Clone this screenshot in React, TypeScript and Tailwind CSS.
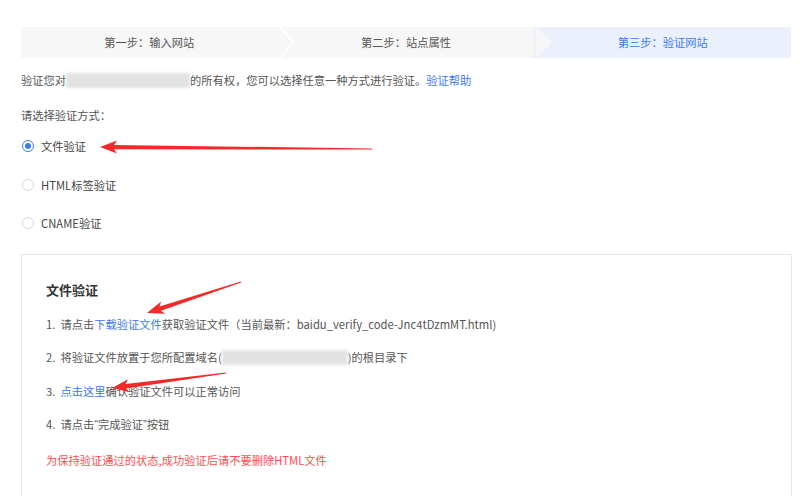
import type { ReactNode } from "react";

const FONT = { fontFamily: '"Noto Sans CJK SC", "Noto Sans", sans-serif' };

const STEPS = ["第一步：输入网站", "第二步：站点属性", "第三步：验证网站"];

function Blur({ w }: { w: number }) {
  return (
    <span className="inline-block align-middle h-[15px] bg-[#dcdcdc] blur-[1.5px] opacity-80" style={{ width: w }} />
  );
}

function Radio({ checked, children }: { checked?: boolean; children: ReactNode }) {
  return (
    <label className="flex items-center gap-[7px] h-4 ml-[1px]">
      <span className={`w-[12px] h-[12px] rounded-full border flex items-center justify-center ${checked ? "border-[#3c7cf0]" : "border-[#d9d9d9]"}`}>
        {checked && <span className="w-[6px] h-[6px] rounded-full bg-[#3c7cf0]" />}
      </span>
      <span className="text-[#444]">{children}</span>
    </label>
  );
}

// arrow polygon from tip to tail, tapered shaft
function arrowPts(tx: number, ty: number, ex: number, ey: number) {
  const dx = ex - tx, dy = ey - ty;
  const len = Math.hypot(dx, dy);
  const ux = dx / len, uy = dy / len;
  const nx = -uy, ny = ux;
  const hl = 17, hw = 6.5, sw = 2.2;
  const p = (a: number, b: number) => `${a.toFixed(1)},${b.toFixed(1)}`;
  return [
    p(tx, ty),
    p(tx + ux * hl + nx * hw, ty + uy * hl + ny * hw),
    p(tx + ux * (hl - 3) + nx * sw, ty + uy * (hl - 3) + ny * sw),
    p(ex + nx * 0.5, ey + ny * 0.5),
    p(ex - nx * 0.5, ey - ny * 0.5),
    p(tx + ux * (hl - 3) - nx * sw, ty + uy * (hl - 3) - ny * sw),
    p(tx + ux * hl - nx * hw, ty + uy * hl - ny * hw),
  ].join(" ");
}

const Q = ({ c }: { c: string }) => <span style={{ fontFamily: '"Liberation Sans", sans-serif' }}>{c}</span>;

export default function App() {
  return (
    <div className="relative w-[800px] h-[496px] overflow-hidden bg-white text-[11.25px] text-[#555]" style={FONT}>
      <div className="px-[21px] pt-[27px] flex flex-col">
        {/* steps */}
        <div className="relative flex h-[31px] w-[770px]">
          {STEPS.map((s, i) => (
            <div key={s} className={`flex-1 flex items-center justify-center ${i === 2 ? "bg-[#eaf1fd] text-[#3c78f0]" : "bg-[#f7f7f7] text-[#555]"}`}>
              {s}
            </div>
          ))}
          <svg className="absolute left-[259px] top-0" width="16" height="31" viewBox="0 0 16 31">
            <polyline points="0,0 13.5,15.5 0,31" fill="none" stroke="#ffffff" strokeWidth="1.6" />
          </svg>
          <svg className="absolute left-[515px] top-0" width="18" height="31" viewBox="0 0 18 31">
            <polygon points="0,0 16,15.5 0,31" fill="#f7f7f7" />
          </svg>
        </div>

        <div className="mt-[14px] h-4 flex items-center">
          <span>验证您对</span>
          <Blur w={124} />
          <span>的所有权，您可以选择任意一种方式进行验证。</span>
          <a className="text-[#3c78f0]">验证帮助</a>
        </div>

        <div className="mt-[19px] h-4 flex items-center">请选择验证方式：</div>

        <div className="mt-[15px]"><Radio checked>文件验证</Radio></div>
        <div className="mt-[23px]"><Radio>HTML标签验证</Radio></div>
        <div className="mt-[22px]"><Radio>CNAME验证</Radio></div>

        <div className="mt-[23px] w-[771px] h-[300px] border border-[#e6e6e6] pl-[24px] pt-[26px] flex flex-col">
          <div className="h-[18px] flex items-center text-[13px] font-bold text-[#333]">文件验证</div>
          <div className="mt-[17px] h-4 flex items-center">
            1.&nbsp;&nbsp;请点击<a className="text-[#3c78f0]">下载验证文件</a>获取验证文件（当前最新：baidu_verify_code-Jnc4tDzmMT.html)
          </div>
          <div className="mt-[17px] h-4 flex items-center">
            2.&nbsp;&nbsp;将验证文件放置于您所配置域名(<Blur w={126} />)的根目录下
          </div>
          <div className="mt-[18px] h-4 flex items-center">
            3.&nbsp;&nbsp;<a className="text-[#3c78f0]">点击这里</a>确认验证文件可以正常访问
          </div>
          <div className="mt-[17px] h-4 flex items-center">
            4.&nbsp;&nbsp;请点击<Q c="“" />完成验证<Q c="”" />按钮
          </div>
          <div className="mt-[20px] h-4 flex items-center text-[#ff4d4f]">为保持验证通过的状态,成功验证后请不要删除HTML文件</div>
        </div>
      </div>

      {/* red annotation arrows */}
      <svg className="absolute inset-0 pointer-events-none" width="800" height="496">
        <polygon points={arrowPts(100, 147, 372, 149)} fill="#f22a2a" />
        <polygon points={arrowPts(147, 313, 241, 282)} fill="#f22a2a" />
        <polygon points={arrowPts(112, 388, 226, 373)} fill="#f22a2a" />
      </svg>
    </div>
  );
}
